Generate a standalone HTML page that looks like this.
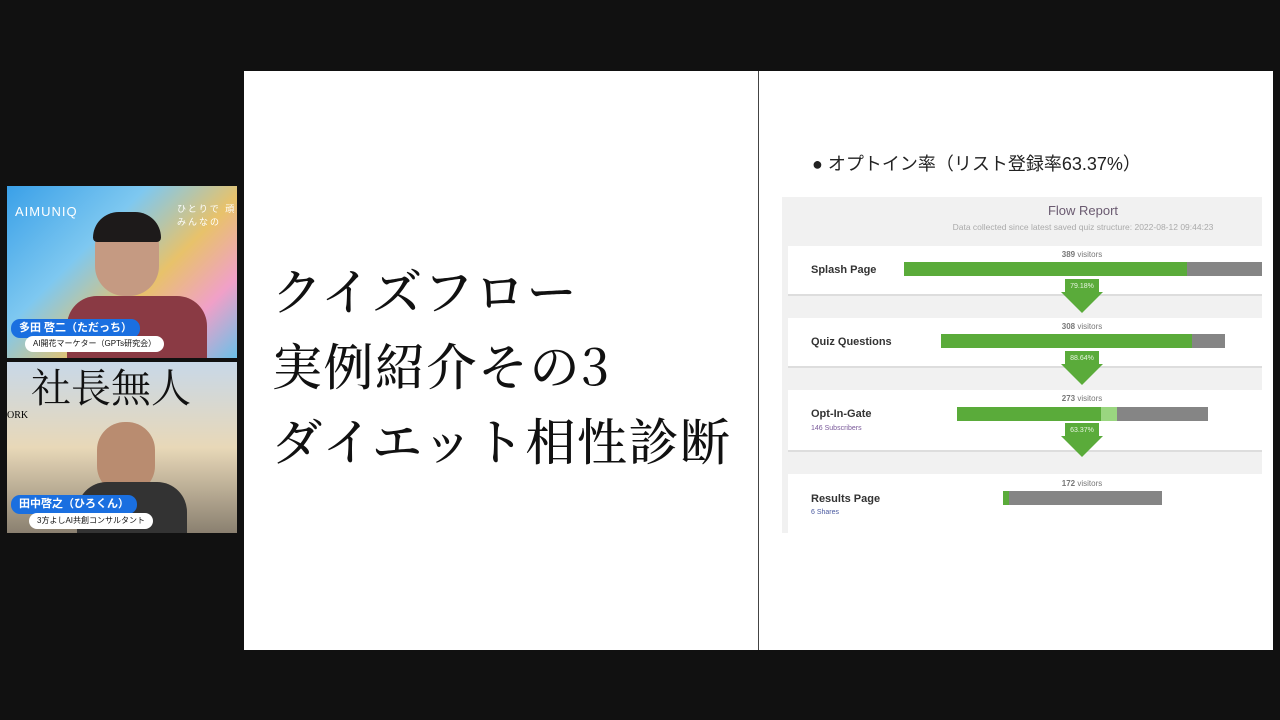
<!DOCTYPE html>
<html><head><meta charset="utf-8"><style>
body{margin:0;width:1280px;height:720px;background:#111;position:relative;overflow:hidden;font-family:"Liberation Sans","Noto Sans CJK JP",sans-serif}
.a{position:absolute}
.tile{position:absolute;left:7px;width:230px;overflow:hidden}
.name{position:absolute;background:#1a6fe0;color:#fff;font-weight:bold;font-size:11px;border-radius:9px;padding:2px 8px;line-height:15px}
.sub{position:absolute;background:#fff;color:#111;font-size:8px;border-radius:8px;padding:2px 8px;line-height:12px}
.title{position:absolute;left:272px;font-family:"Noto Serif CJK SC","Liberation Serif",serif;font-size:50px;color:#111;line-height:75px;top:252px;letter-spacing:1.5px;font-weight:500}
.row{position:absolute;left:788px;width:474px;background:#fff;border-bottom:2px solid #ddd}
.lbl{position:absolute;left:811px;font-size:11px;color:#333;font-weight:bold}
.vis{position:absolute;left:1082px;transform:translateX(-50%);font-size:8px;color:#777}
.bar{position:absolute;height:14px;background:#858585}
.g{position:absolute;top:0;left:0;height:14px;background:#5aab3a}
.arr{position:absolute;left:1061px;width:42px;height:34px}
</style></head><body>
<div class="tile" style="top:186px;height:172px;background:linear-gradient(135deg,#3aa0e8 0%,#7ec8f0 35%,#e8c26a 60%,#f0a0c8 80%,#6bc0e8 100%)">
 <div class="a" style="left:8px;top:18px;color:#fff;font-size:13px;letter-spacing:1px">AIMUNIQ</div>
 <div class="a" style="left:170px;top:16px;color:#fff;font-size:9px;letter-spacing:2px">ひとりで 頑<br>みんなの</div>
 <div class="a" style="left:88px;top:30px;width:64px;height:80px;border-radius:30px;background:#c59a82"></div>
 <div class="a" style="left:86px;top:26px;width:68px;height:30px;border-radius:30px 30px 5px 5px;background:#1d1a1a"></div>
 <div class="a" style="left:60px;top:110px;width:140px;height:62px;border-radius:30px 30px 0 0;background:#8a3a44"></div>
 <div class="name" style="left:4px;top:133px">多田 啓二（ただっち）</div>
 <div class="sub" style="left:18px;top:150px">AI開花マーケター（GPTs研究会）</div>
</div>
<div class="tile" style="top:362px;height:171px;background:linear-gradient(180deg,#c8d8e8 0%,#e8d8b8 50%,#8a8070 100%)">
 <div class="a" style="left:24px;top:2px;font-family:'Noto Serif CJK SC',serif;font-size:40px;color:#111;line-height:44px">社長無人</div>
 <div class="a" style="left:0;top:48px;font-size:10px;font-family:'Liberation Serif',serif">ORK</div>
 <div class="a" style="left:90px;top:60px;width:58px;height:72px;border-radius:28px;background:#b98c70"></div>
 <div class="a" style="left:70px;top:120px;width:110px;height:51px;border-radius:30px 30px 0 0;background:#333"></div>
 <div class="name" style="left:4px;top:133px">田中啓之（ひろくん）</div>
 <div class="sub" style="left:22px;top:151px">3方よしAI共創コンサルタント</div>
</div>
<div class="a" style="left:244px;top:71px;width:1029px;height:579px;background:#fff"></div>
<div class="a" style="left:758px;top:71px;width:1px;height:579px;background:#444"></div>
<div class="title">クイズフロー<br>実例紹介その3<br>ダイエット相性診断</div>
<div class="a" style="left:812px;top:150px;font-size:18px;color:#222">●&nbsp;オプトイン率（リスト登録率63.37%）</div>
<div class="a" style="left:782px;top:197px;width:480px;height:336px;background:#f1f1f1"></div>
<div class="a" style="left:1083px;top:203px;transform:translateX(-50%);font-size:13px;color:#6a5a70">Flow Report</div>
<div class="a" style="left:1083px;top:222px;transform:translateX(-50%);font-size:8.5px;color:#aaa;white-space:nowrap">Data collected since latest saved quiz structure: 2022-08-12 09:44:23</div>
<div class="row" style="top:246px;height:48px"></div>
<div class="row" style="top:318px;height:48px"></div>
<div class="row" style="top:390px;height:60px"></div>
<div class="row" style="top:474px;height:59px;border:0"></div>
<div class="lbl" style="top:264px">Splash Page</div>
<div class="lbl" style="top:336px">Quiz Questions</div>
<div class="lbl" style="top:408px">Opt-In-Gate</div>
<div class="a" style="left:811px;top:425px;font-size:7px;color:#7a5a9a">146 Subscribers</div>
<div class="lbl" style="top:493px">Results Page</div>
<div class="a" style="left:811px;top:509px;font-size:7px;color:#4a5aa0">6 Shares</div>
<div class="vis" style="top:250px"><b>389</b> visitors</div>
<div class="vis" style="top:322px"><b>308</b> visitors</div>
<div class="vis" style="top:394px"><b>273</b> visitors</div>
<div class="vis" style="top:479px"><b>172</b> visitors</div>
<div class="bar" style="left:904px;top:262px;width:358px"><div class="g" style="width:283px"></div></div>
<div class="bar" style="left:941px;top:334px;width:284px"><div class="g" style="width:251px"></div></div>
<div class="bar" style="left:957px;top:407px;width:251px"><div class="g" style="width:160px;background:linear-gradient(90deg,#5aab3a 90%,#9ad680 90%)"></div></div>
<div class="bar" style="left:1003px;top:491px;width:159px"><div class="g" style="width:6px"></div></div>
<svg class="arr" style="top:279px" viewBox="0 0 42 34"><path d="M4 0H38V13H42L21 34L0 13H4Z" fill="#5aab3a"/><text x="21" y="9" font-size="7" fill="#e8f5e0" text-anchor="middle" font-family="Liberation Sans">79.18%</text></svg>
<svg class="arr" style="top:351px" viewBox="0 0 42 34"><path d="M4 0H38V13H42L21 34L0 13H4Z" fill="#5aab3a"/><text x="21" y="9" font-size="7" fill="#e8f5e0" text-anchor="middle" font-family="Liberation Sans">88.64%</text></svg>
<svg class="arr" style="top:423px" viewBox="0 0 42 34"><path d="M4 0H38V13H42L21 34L0 13H4Z" fill="#5aab3a"/><text x="21" y="9" font-size="7" fill="#e8f5e0" text-anchor="middle" font-family="Liberation Sans">63.37%</text></svg>
</body></html>
